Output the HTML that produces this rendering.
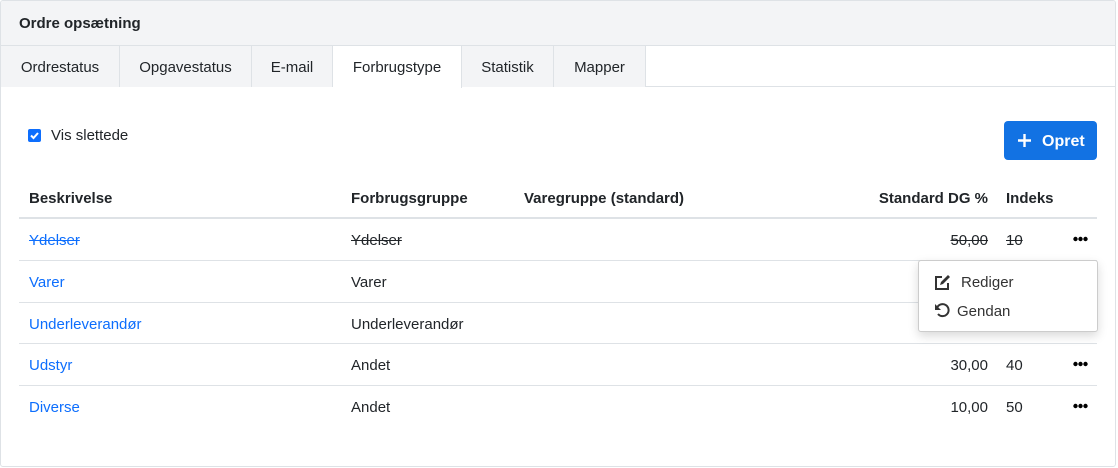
<!DOCTYPE html>
<html><head><style>
*{box-sizing:border-box;margin:0;padding:0}
body{width:1118px;height:468px;font-family:"Liberation Sans",sans-serif;font-size:15px;color:#212529;background:#fff;position:relative;overflow:hidden}
.card{position:absolute;left:0;top:0;width:1116px;height:467px;border:1px solid #dee2e6;border-radius:3px;overflow:hidden}
.hdr{height:45px;background:#f3f4f6;border-bottom:1px solid #dee2e6;font-weight:bold;padding:14px 18px;font-size:15px}
.tabs{position:absolute;top:45px;left:0;height:41px;width:100%;border-bottom:1px solid #dee2e6}
.tab{position:absolute;top:0;height:41px;background:#f3f4f6;border-right:1px solid #dee2e6;text-align:center;line-height:43px}
.tab.a{background:#fff;height:42px}
.chk{position:absolute;left:28px;top:129px;width:13px;height:13px;background:#0d6efd;border-radius:2px}
.btn{position:absolute;left:1004px;top:121px;width:93px;height:39px;background:#1272e3;border-radius:4px;color:#fff;font-weight:bold;font-size:16px;line-height:41px;padding-left:38px}
.t{position:absolute;white-space:nowrap}
.b{font-weight:bold}
.l{color:#0d6efd}
.s{text-decoration:line-through}
.hl{position:absolute;left:19px;width:1078px;height:1px;background:#dee2e6}
.dots{position:absolute;left:1073px}
.dd{position:absolute;left:918px;top:260px;width:180px;height:72px;background:#fff;border:1px solid #ccc;border-radius:3px;box-shadow:0 4px 10px rgba(0,0,0,.15)}
</style></head><body>
<div class="card">
<div class="hdr">Ordre opsætning</div>
<div class="tabs">
<div class="tab" style="left:0;width:119px">Ordrestatus</div>
<div class="tab" style="left:119px;width:132px">Opgavestatus</div>
<div class="tab" style="left:251px;width:81px">E-mail</div>
<div class="tab a" style="left:332px;width:129px">Forbrugstype</div>
<div class="tab" style="left:461px;width:92px">Statistik</div>
<div class="tab" style="left:553px;width:92px">Mapper</div>
</div>
</div>
<div class="chk"><svg width="13" height="13" viewBox="0 0 13 13"><path d="M3 6.5l2.5 2.5L10 4" stroke="#fff" stroke-width="2" fill="none"/></svg></div>
<div class="t" style="left:51px;top:127px">Vis slettede</div>
<div class="btn"><svg style="position:absolute;left:13px;top:12px" width="15" height="15" viewBox="0 0 15 15"><path d="M7.5 1v13M1 7.5h13" stroke="#fff" stroke-width="2.4"/></svg>Opret</div>
<div class="t b" style="left:29px;top:190px">Beskrivelse</div>
<div class="t b" style="left:351px;top:190px">Forbrugsgruppe</div>
<div class="t b" style="left:524px;top:190px">Varegruppe (standard)</div>
<div class="t b" style="right:130px;top:190px">Standard DG %</div>
<div class="t b" style="left:1006px;top:190px">Indeks</div>
<div class="hl" style="top:217px;height:2px"></div>

<div class="t l s" style="left:29px;top:232px">Ydelser</div>
<div class="t s" style="left:351px;top:232px">Ydelser</div>
<div class="t s" style="right:130px;top:232px">50,00</div>
<div class="t s" style="left:1006px;top:232px">10</div>
<svg class="dots" style="top:236px" width="16" height="6"><circle cx="2.5" cy="3" r="2.2"/><circle cx="7.5" cy="3" r="2.2"/><circle cx="12.5" cy="3" r="2.2"/></svg>
<div class="hl" style="top:260px"></div>

<div class="t l" style="left:29px;top:274px">Varer</div>
<div class="t" style="left:351px;top:274px">Varer</div>
<div class="hl" style="top:302px"></div>

<div class="t l" style="left:29px;top:316px">Underleverandør</div>
<div class="t" style="left:351px;top:316px">Underleverandør</div>
<div class="hl" style="top:343px"></div>

<div class="t l" style="left:29px;top:357px">Udstyr</div>
<div class="t" style="left:351px;top:357px">Andet</div>
<div class="t" style="right:130px;top:357px">30,00</div>
<div class="t" style="left:1006px;top:357px">40</div>
<svg class="dots" style="top:361px" width="16" height="6"><circle cx="2.5" cy="3" r="2.2"/><circle cx="7.5" cy="3" r="2.2"/><circle cx="12.5" cy="3" r="2.2"/></svg>
<div class="hl" style="top:385px"></div>

<div class="t l" style="left:29px;top:399px">Diverse</div>
<div class="t" style="left:351px;top:399px">Andet</div>
<div class="t" style="right:130px;top:399px">10,00</div>
<div class="t" style="left:1006px;top:399px">50</div>
<svg class="dots" style="top:403px" width="16" height="6"><circle cx="2.5" cy="3" r="2.2"/><circle cx="7.5" cy="3" r="2.2"/><circle cx="12.5" cy="3" r="2.2"/></svg>

<div class="dd">
<svg style="position:absolute;left:15px;top:13px" width="18" height="17" viewBox="0 0 18 17"><path d="M8 3H2v12h12V9" stroke="#333" stroke-width="2" fill="none"/><path d="M6 11l1-3 7-7 2 2-7 7z" fill="#333"/></svg>
<div class="t" style="left:42px;top:13px;color:#333">Rediger</div>
<svg style="position:absolute;left:14px;top:41px" width="18" height="17" viewBox="0 0 18 17"><path d="M4 6a6 6 0 1 1 1 6" stroke="#333" stroke-width="2" fill="none"/><path d="M2 2v6h6z" fill="#333"/></svg>
<div class="t" style="left:38px;top:42px;color:#333">Gendan</div>
</div>
</body></html>
